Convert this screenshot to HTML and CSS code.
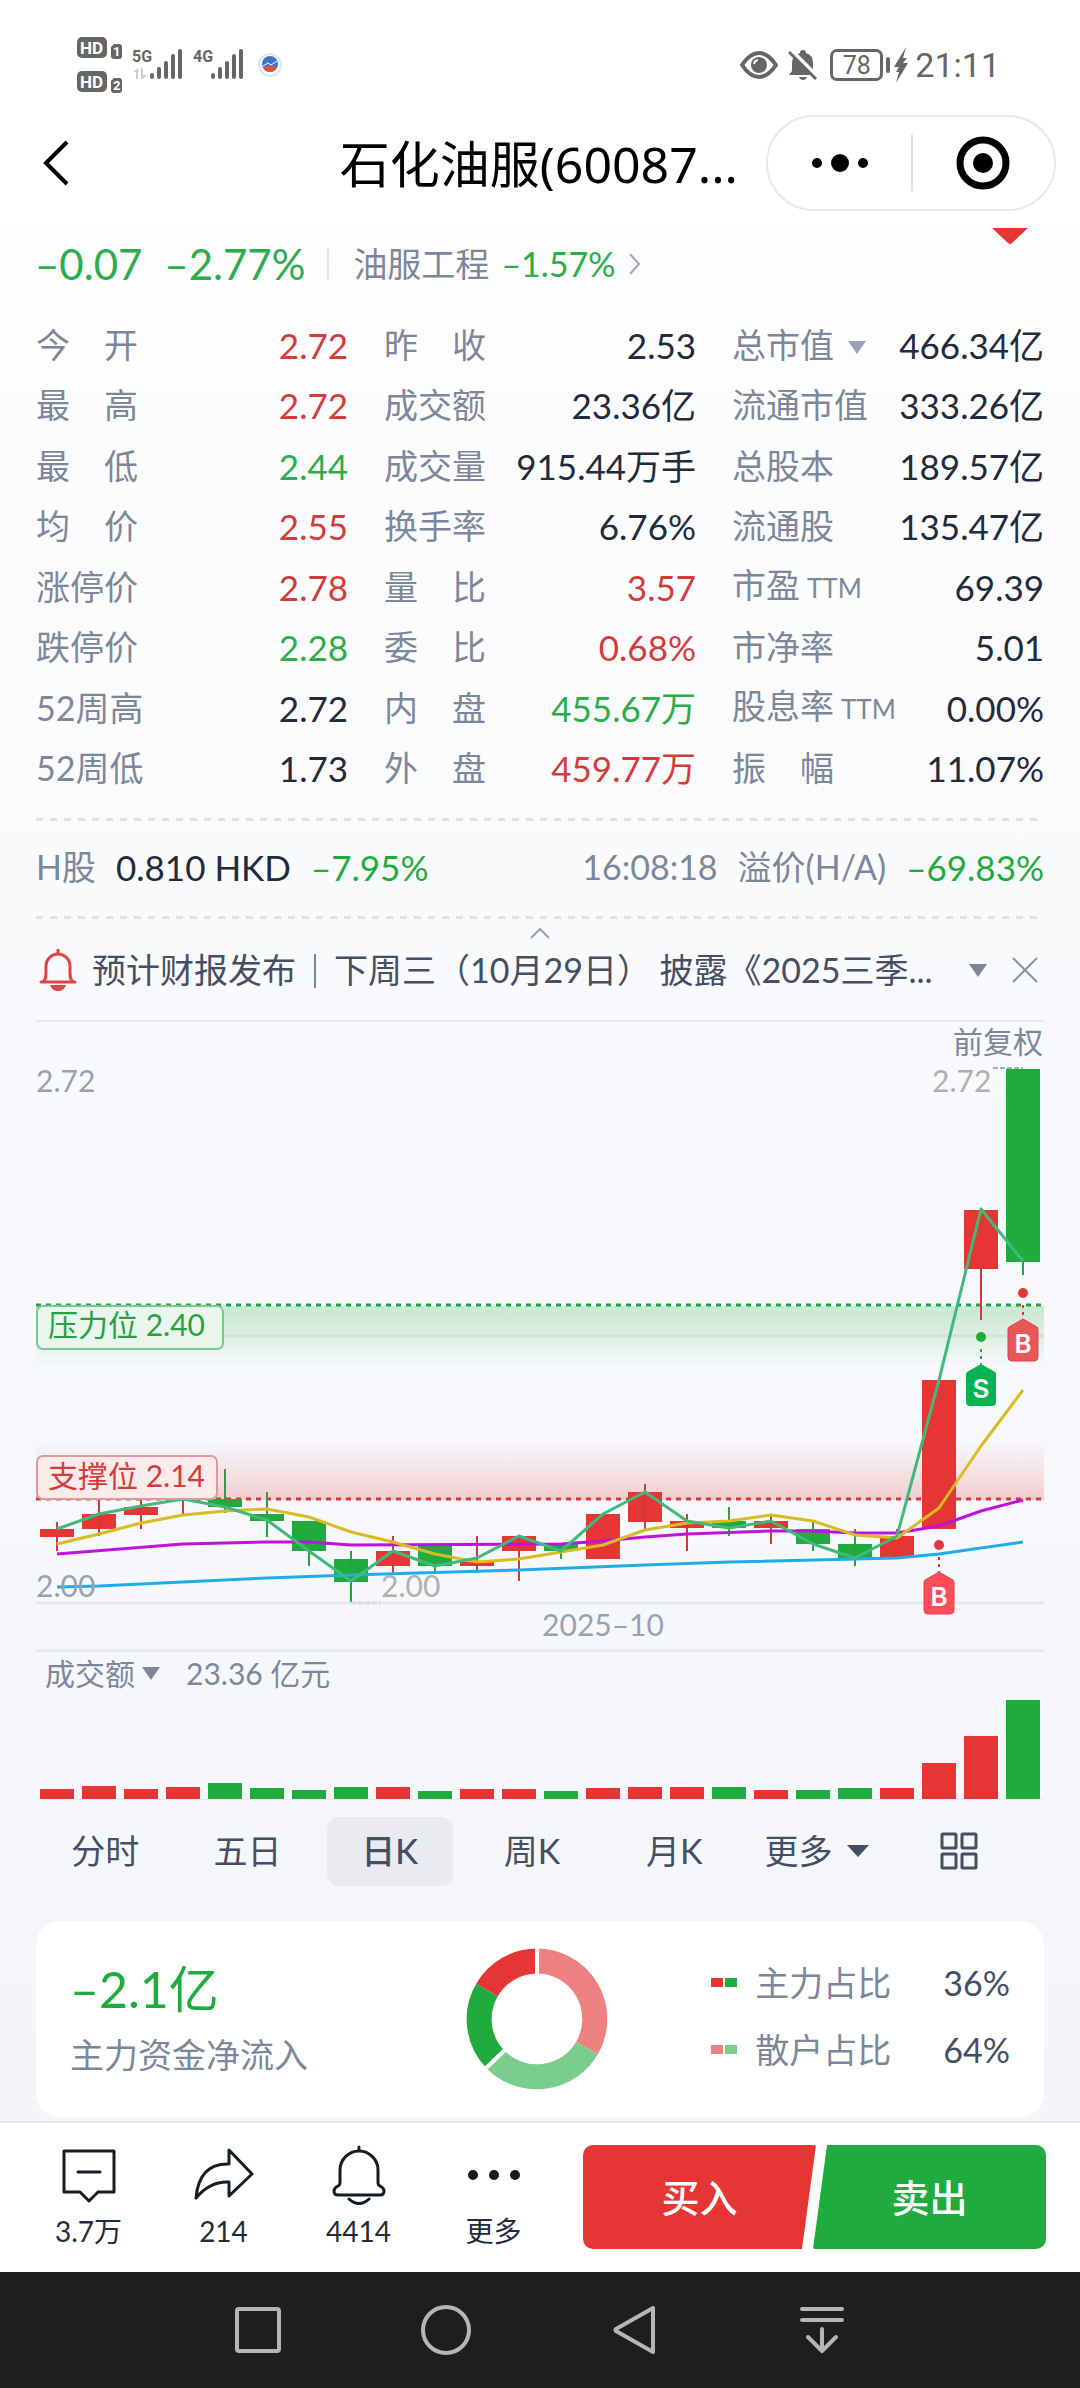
FILE: index.html
```html
<!DOCTYPE html>
<html lang="zh-CN">
<head>
<meta charset="utf-8">
<meta name="viewport" content="width=device-width, initial-scale=1">
<title>石化油服</title>
<link rel="stylesheet" href="styles.css">
</head>
<body>
<div class="status">
  <svg class="status-left" width="240" height="80" viewBox="60 25 240 80" role="img" aria-label="信号">
    <g fill="#666">
      <rect x="77" y="37" width="30" height="21" rx="5"/>
      <rect x="77" y="71" width="30" height="21" rx="5"/>
      <path d="M114 44h5a3 3 0 0 1 3 3v9a3 3 0 0 1-3 3h-5a3 3 0 0 1-3-3v-9z"/>
      <path d="M114 78h5a3 3 0 0 1 3 3v9a3 3 0 0 1-3 3h-5a3 3 0 0 1-3-3v-9z"/>
    </g>
    <g class="badge-text"><text x="80" y="54">HD</text><text x="80" y="88">HD</text></g>
    <g class="sim-text"><text x="113" y="56">1</text><text x="113" y="90">2</text></g>
    <g class="net-text"><text x="132" y="62">5G</text><text x="193" y="62">4G</text></g>
    <path d="M138 68v11h-2v-7h-3zM141 68h2v7h4l-4 4h-2z" fill="#ccc"/>
    <g stroke="#666" stroke-width="4" stroke-linecap="round">
      <path d="M152 75v2M159 69v8M166 63v14M173 56v21M180 51v26M213 75v2M220 69v8M227 63v14M234 56v21M241 51v26"/>
    </g>
    <circle cx="270" cy="65" r="11" fill="none" stroke="#dbe8f0" stroke-width="2"/>
    <circle cx="270" cy="64" r="8" fill="#3d74c9"/>
    <path d="M263 67q7-3 14 0q-2 5-7 5t-7-5z" fill="#d9553f"/>
    <path d="M263 66l5-3 3 2 6-4" fill="none" stroke="#fff" stroke-width="1"/>
  </svg>
  <div class="status-right">
    <svg width="38" height="30" viewBox="0 0 38 30" aria-hidden="true"><path d="M2 15Q10 3 19 3t17 12Q28 27 19 27T2 15z" fill="none" stroke="#666" stroke-width="4"/><circle cx="19" cy="15" r="8" fill="#666"/><path d="M14 14a5 5 0 0 1 4-4" stroke="#fff" stroke-width="2" fill="none"/></svg>
    <svg width="30" height="32" viewBox="0 0 30 32" aria-hidden="true"><path d="M1 26l3-4V14q0-8 8-10a3 3 0 0 1 6 0q7 2 7 10v8l3 4z" fill="#666"/><path d="M11 28h8q-1 3-4 3t-4-3z" fill="#666"/><path d="M3 1l27 27" stroke="#fff" stroke-width="4"/><path d="M1 3l27 27" stroke="#666" stroke-width="3"/></svg>
    <span class="battery">78</span>
    <svg width="16" height="36" viewBox="0 0 16 36" aria-hidden="true"><path d="M13 0L1 20h5l-3 5h3L3 36 15 16h-5l4-5h-4z" fill="#666"/></svg>
    <span class="clock">21:11</span>
  </div>
</div>

<header class="header">
  <button class="back" aria-label="返回"><svg width="28" height="46" viewBox="0 0 28 46"><path d="M25 2L4 23l21 21" fill="none" stroke="#000" stroke-width="4"/></svg></button>
  <h1 class="title">石化油服(60087...</h1>
  <div class="capsule">
    <button aria-label="菜单"><svg width="58" height="20" viewBox="0 0 58 20"><circle cx="6" cy="10" r="5"/><circle cx="29" cy="10" r="9"/><circle cx="52" cy="10" r="5"/></svg></button>
    <button aria-label="关闭"><svg width="54" height="54" viewBox="0 0 54 54"><circle cx="27" cy="27" r="23" fill="none" stroke="#000" stroke-width="7"/><circle cx="27" cy="27" r="10"/></svg></button>
  </div>
</header>

<main class="content">
  <section class="quote">
    <span class="change down">–0.07</span>
    <span class="change down">–2.77%</span>
    <a class="sector" href="#sector">油服工程 <span class="down">–1.57%</span><svg width="14" height="24" viewBox="0 0 14 24" aria-hidden="true"><path d="M2 2l9 10-9 10" fill="none" stroke="#a0a8b8" stroke-width="2"/></svg></a>
    <svg class="marker" width="36" height="16" viewBox="0 0 36 16" aria-hidden="true"><path d="M0 0h36L20 15q-2 2-4 0z" fill="#e53535"/></svg>
  </section>

  <section class="stats">
    <dl>
      <div><dt>今　开</dt><dd class="up">2.72</dd></div>
      <div><dt>最　高</dt><dd class="up">2.72</dd></div>
      <div><dt>最　低</dt><dd class="down">2.44</dd></div>
      <div><dt>均　价</dt><dd class="up">2.55</dd></div>
      <div><dt>涨停价</dt><dd class="up">2.78</dd></div>
      <div><dt>跌停价</dt><dd class="down">2.28</dd></div>
      <div><dt>52周高</dt><dd>2.72</dd></div>
      <div><dt>52周低</dt><dd>1.73</dd></div>
    </dl>
    <dl>
      <div><dt>昨　收</dt><dd>2.53</dd></div>
      <div><dt>成交额</dt><dd>23.36亿</dd></div>
      <div><dt>成交量</dt><dd>915.44万手</dd></div>
      <div><dt>换手率</dt><dd>6.76%</dd></div>
      <div><dt>量　比</dt><dd class="up">3.57</dd></div>
      <div><dt>委　比</dt><dd class="up">0.68%</dd></div>
      <div><dt>内　盘</dt><dd class="down">455.67万</dd></div>
      <div><dt>外　盘</dt><dd class="up">459.77万</dd></div>
    </dl>
    <dl>
      <div><dt>总市值<svg class="caret" width="18" height="13" viewBox="0 0 18 13" aria-hidden="true"><path d="M0 0h18L9 13z" fill="#98a1b5"/></svg></dt><dd>466.34亿</dd></div>
      <div><dt>流通市值</dt><dd>333.26亿</dd></div>
      <div><dt>总股本</dt><dd>189.57亿</dd></div>
      <div><dt>流通股</dt><dd>135.47亿</dd></div>
      <div><dt>市盈<small>TTM</small></dt><dd>69.39</dd></div>
      <div><dt>市净率</dt><dd>5.01</dd></div>
      <div><dt>股息率<small>TTM</small></dt><dd>0.00%</dd></div>
      <div><dt>振　幅</dt><dd>11.07%</dd></div>
    </dl>
  </section>

  <section class="hshare">
    <span>H股</span>
    <strong>0.810 HKD</strong>
    <strong class="down">–7.95%</strong>
    <span class="push">16:08:18</span>
    <span>溢价(H/A)</span>
    <strong class="down">–69.83%</strong>
  </section>
  <button class="collapse" aria-label="收起"><svg width="20" height="12" viewBox="0 0 20 12"><path d="M1 11l9-9 9 9" fill="none" stroke="#98a1b5" stroke-width="2"/></svg></button>

  <section class="notice">
    <svg width="38" height="42" viewBox="0 0 38 42" aria-hidden="true"><path d="M19 1v4M2 33h34M4 33q3-3 3-8v-8a12 12 0 0 1 24 0v8q0 5 3 8" fill="none" stroke="#e04444" stroke-width="3" stroke-linecap="round"/><path d="M11 36h16q-2 6-8 6t-8-6z" fill="#d94a4a"/></svg>
    <p>预计财报发布<i></i>下周三（10月29日） 披露《2025三季...</p>
    <button aria-label="展开"><svg width="18" height="13" viewBox="0 0 18 13"><path d="M0 0h18L9 13z" fill="#7d879b"/></svg></button>
    <button aria-label="关闭提醒"><svg width="26" height="26" viewBox="0 0 26 26"><path d="M1 1l24 24M25 1L1 25" stroke="#8a94a8" stroke-width="2"/></svg></button>
  </section>

  <svg class="kline" viewBox="0 1022 1080 630" role="img" aria-label="日K线图">
    <defs>
      <linearGradient id="press" x1="0" y1="0" x2="0" y2="1"><stop offset="0" stop-color="#1fab3d" stop-opacity=".22"/><stop offset=".5" stop-color="#1fab3d" stop-opacity=".12"/><stop offset="1" stop-color="#1fab3d" stop-opacity="0"/></linearGradient>
      <linearGradient id="hold" x1="0" y1="1" x2="0" y2="0"><stop offset="0" stop-color="#e53535" stop-opacity=".22"/><stop offset="1" stop-color="#e53535" stop-opacity="0"/></linearGradient>
      <path id="tag" d="M0 0L14 8Q15 9 15 11V38Q15 42 11 42H-11Q-15 42-15 38V11Q-15 9-14 8z"/>
    </defs>
    <rect x="36" y="1306" width="1008" height="60" fill="url(#press)"/>
    <rect x="36" y="1442" width="1008" height="58" fill="url(#hold)"/>
    <path d="M36 1336H1044M36 1603H1044M36 1651H1044" stroke="#788296" stroke-opacity=".12" stroke-width="3"/>
    <path d="M36 1305H1044" stroke="#2a9f44" stroke-width="3" stroke-dasharray="5 5"/>
    <path d="M36 1499H1044" stroke="#cf3b3b" stroke-width="3" stroke-dasharray="5 5"/>

    <!-- rising candles -->
    <path fill="#e53535" d="M40 1529h34v8H40zM82 1514h34v15H82zM124 1507h34v8h-34zM166 1499h34v2h-34zM376 1551h34v15h-34zM460 1562h34v4h-34zM502 1536h34v15h-34zM586 1514h34v45h-34zM628 1492h34v30h-34zM670 1521h34v7h-34zM754 1521h34v7h-34zM880 1536h34v22h-34zM922 1380h34v149h-34zM964 1210h34v59h-34z"/>
    <path stroke="#cf3b3b" stroke-width="2" d="M57 1522v29M99 1500v36M141 1500v29M183 1500v14M393 1536v37M477 1536v37M519 1536v45M645 1484v46M687 1514v37M771 1514v30M897 1529v7M981 1269v51"/>
    <!-- falling candles -->
    <path fill="#1fab3d" d="M208 1499h34v8h-34zM250 1514h34v7h-34zM292 1521h34v30h-34zM334 1559h34v23h-34zM418 1546h34v20h-34zM544 1544h34v7h-34zM712 1521h34v7h-34zM796 1529h34v15h-34zM838 1544h34v14h-34zM1006 1069h34v193h-34z"/>
    <path stroke="#2a9f44" stroke-width="2" d="M225 1469v44M267 1492v45M309 1551v15M351 1551v51M435 1566v6M561 1551v8M729 1507v29M813 1522v29M855 1529v37M1023 1262v13"/>

    <g fill="none" stroke-width="3" stroke-linejoin="round">
      <path stroke="#1fadea" d="M57 1587L99 1586 267 1578 351 1575 519 1570 645 1565 729 1562 897 1558 939 1554 981 1548 1023 1542"/>
      <path stroke="#c212da" d="M57 1554L183 1544 267 1542 309 1542 351 1545 561 1544 603 1541 645 1537 687 1534 771 1531 813 1531 855 1533 897 1533 939 1526 981 1511 1023 1500"/>
      <path stroke="#d9bb22" d="M57 1544L99 1534 141 1523 183 1515 225 1511 267 1509 309 1517 351 1532 393 1542 435 1554 477 1562 519 1559 561 1552 603 1545 645 1530 687 1523 729 1521 771 1515 813 1521 855 1535 897 1538 939 1508 981 1446 1023 1390"/>
      <path stroke="#40b97a" d="M57 1529L99 1514 141 1506 183 1499 225 1507 267 1520 309 1551 351 1581 393 1551 435 1566 477 1558 519 1536 561 1551 603 1514 645 1492 687 1521 729 1528 771 1521 813 1544 855 1558 897 1536 939 1380 981 1209 1023 1261"/>
    </g>

    <!-- price tags of the two levels -->
    <rect x="37" y="1306" width="186" height="43" rx="6" fill="#e8f6eb" stroke="#7fc78f" stroke-width="2"/>
    <text x="48" y="1336" class="level down">压力位 2.40</text>
    <rect x="37" y="1456" width="180" height="43" rx="6" fill="#fdeaea" stroke="#dc9a9e" stroke-width="2"/>
    <text x="48" y="1487" class="level up">支撑位 2.14</text>

    <g class="axis">
      <text x="1043" y="1053" text-anchor="end" fill="#7d879b">前复权</text>
      <text x="36" y="1092">2.72</text>
      <text x="36" y="1597">2.00</text>
      <text x="603" y="1636" text-anchor="middle">2025–10</text>
      <g fill="#b0b0b0"><text x="932" y="1092">2.72</text><text x="381" y="1597">2.00</text></g>
    </g>
    <path d="M993 1068h30" stroke="#b0b0b0" stroke-width="2" stroke-dasharray="5 2"/>
    <path d="M351 1603h30" stroke="#dcdcdc" stroke-width="3" stroke-dasharray="5 2"/>

    <!-- trade markers -->
    <g fill="#e03a3a"><circle cx="1023" cy="1293" r="5"/><circle cx="939" cy="1545" r="5"/></g>
    <circle cx="981" cy="1337" r="5" fill="#1fab3d"/>
    <path d="M1023 1305v15M939 1557v15" stroke="#cf3b3b" stroke-width="2" stroke-dasharray="3 4"/>
    <path d="M981 1349v15" stroke="#2a9f44" stroke-width="2" stroke-dasharray="3 4"/>
    <use href="#tag" x="1023" y="1319" fill="#ea5558" stroke="#dd4248"/>
    <use href="#tag" x="939" y="1572" fill="#ff4d5a" stroke="#ea3c4a"/>
    <use href="#tag" x="981" y="1364" fill="#05b350"/>
    <g class="tag-text"><text x="1023" y="1353">B</text><text x="939" y="1606">B</text><text x="981" y="1398">S</text></g>
  </svg>

  <section class="volume">
    <div class="volume-head"><button>成交额<svg width="18" height="13" viewBox="0 0 18 13" aria-hidden="true"><path d="M0 0h18L9 13z" fill="#7d879b"/></svg></button><span>23.36 亿元</span></div>
    <div class="bars">
      <i class="r" style="height:10px"></i><i class="r" style="height:13px"></i><i class="r" style="height:10px"></i><i class="r" style="height:12px"></i><i style="height:16px"></i><i style="height:11px"></i><i style="height:9px"></i><i style="height:12px"></i><i class="r" style="height:12px"></i><i style="height:8px"></i><i class="r" style="height:10px"></i><i class="r" style="height:10px"></i><i style="height:8px"></i><i class="r" style="height:11px"></i><i class="r" style="height:12px"></i><i class="r" style="height:12px"></i><i style="height:12px"></i><i class="r" style="height:9px"></i><i style="height:9px"></i><i style="height:11px"></i><i class="r" style="height:11px"></i><i class="r" style="height:36px"></i><i class="r" style="height:63px"></i><i style="height:99px"></i>
    </div>
  </section>

  <nav class="tabs">
    <button>分时</button>
    <button>五日</button>
    <button class="active">日K</button>
    <button>周K</button>
    <button>月K</button>
    <button>更多<svg width="22" height="12" viewBox="0 0 22 12" aria-hidden="true"><path d="M0 0h22L11 12z" fill="#444f63"/></svg></button>
    <button aria-label="多图"><svg width="38" height="38" viewBox="0 0 38 38"><g fill="none" stroke="#444f63" stroke-width="3"><rect x="2" y="2" width="14" height="14" rx="1"/><rect x="22" y="2" width="14" height="14" rx="1"/><rect x="2" y="22" width="14" height="14" rx="1"/><rect x="22" y="22" width="14" height="14" rx="1"/></g></svg></button>
  </nav>

  <section class="card">
    <div class="flow"><strong>–2.1亿</strong><span>主力资金净流入</span></div>
    <svg class="donut" width="142" height="142" viewBox="-71 -71 142 142" role="img" aria-label="资金占比">
      <g fill="none" stroke-width="25">
        <path stroke="#ee8080" d="M0-58A58 58 0 0 1 50 29"/>
        <path stroke="#7acd8d" d="M50 29A58 58 0 0 1-42 40"/>
        <path stroke="#1fab3d" d="M-42 40A58 58 0 0 1-50-29"/>
        <path stroke="#e53535" d="M-50-29A58 58 0 0 1 0-58"/>
      </g>
      <path d="M0-40V-71M-29 28L-54 52" stroke="#fff" stroke-width="4"/>
    </svg>
    <dl class="legend">
      <div><dt><i class="main-in"></i><i class="main-out"></i>主力占比</dt><dd>36%</dd></div>
      <div><dt><i class="retail-in"></i><i class="retail-out"></i>散户占比</dt><dd>64%</dd></div>
    </dl>
  </section>
</main>

<footer class="toolbar">
  <div class="tools">
    <button><svg width="60" height="60" viewBox="0 0 60 60" aria-hidden="true"><path d="M5 6h50v41H39l-9 9-9-9H5z M19 27h22"/></svg>3.7万</button>
    <button><svg width="60" height="60" viewBox="0 0 60 60" aria-hidden="true"><path d="M35 5l23 24-23 22V37Q16 36 2 53 5 18 35 19z"/></svg>214</button>
    <button><svg width="60" height="60" viewBox="0 0 60 60" aria-hidden="true"><path d="M30 2v4M11 38V25a19 19 0 0 1 38 0v13q0 2 2 3 4 2 4 5 0 4-4 4H9q-4 0-4-4 0-3 4-5 2-1 2-3zM20 54q10 9 20 0"/></svg>4414</button>
    <button><svg width="60" height="60" viewBox="0 0 60 60" aria-hidden="true"><g fill="#1a1a1a" stroke="none"><circle cx="9" cy="30" r="5"/><circle cx="30" cy="30" r="5"/><circle cx="51" cy="30" r="5"/></g></svg>更多</button>
  </div>
  <div class="trade"><button class="buy">买入</button><button class="sell">卖出</button></div>
</footer>

<nav class="sysnav">
  <button aria-label="最近任务"><svg width="52" height="52" viewBox="0 0 52 52"><rect x="5" y="5" width="42" height="42" rx="2"/></svg></button>
  <button aria-label="主页"><svg width="52" height="52" viewBox="0 0 52 52"><circle cx="26" cy="26" r="23"/></svg></button>
  <button aria-label="后退"><svg width="52" height="52" viewBox="0 0 52 52"><path d="M45 4v44L8 27q-1-1 0-2z"/></svg></button>
  <button aria-label="下拉通知"><svg width="52" height="52" viewBox="0 0 52 52"><path d="M6 5h40M6 16h40M26 25v22M12 33l14 14 14-14"/></svg></button>
</nav>
</body>
</html>
```

FILE: styles.css
```css
* { box-sizing: border-box; }
body {
  margin: 0;
  background: #fff;
  color: #222b3c;
  font-family: Lato, "Noto Sans CJK SC", sans-serif;
  font-size: 34px;
  line-height: 48px;
}
button {
  margin: 0;
  padding: 0;
  border: 0;
  background: none;
  color: inherit;
  font: inherit;
  white-space: nowrap;
}
dl, dd, p, h1 { margin: 0; }
svg { flex: none; }
.up { color: #d23c3c; fill: #d23c3c; }
.down { color: #2bad4c; fill: #2a9f44; }

/* phone status bar */
.status {
  display: flex;
  align-items: flex-start;
  justify-content: space-between;
  height: 112px;
  padding: 16px 80px 0 60px;
}
.status-left { margin-top: 9px; }
.status-left text { font-family: Roboto, sans-serif; font-weight: 700; }
.badge-text { fill: #fff; font-size: 17px; }
.sim-text { fill: #fff; font-size: 13px; }
.net-text { fill: #666; font-size: 16px; }
.status-right {
  display: flex;
  align-items: center;
  gap: 10px;
  height: 98px;
  color: #666;
  font-family: Roboto, sans-serif;
}
.battery {
  position: relative;
  width: 53px;
  height: 32px;
  margin-left: 2px;
  border: 3px solid #666;
  border-radius: 7px;
  font-size: 25px;
  line-height: 27px;
  text-align: center;
}
.battery::after {
  content: "";
  position: absolute;
  top: 5px;
  right: -10px;
  width: 4px;
  height: 16px;
  border-radius: 2px;
  background: #666;
}
.status-right .clock { margin-left: -4px; }

/* title bar */
.header {
  display: flex;
  align-items: center;
  height: 116px;
  padding: 0 24px 14px 42px;
  color: #000;
}
.back { display: flex; }
.title {
  margin: 2px 28px 0 auto;
  font: 400 50px/70px "Noto Sans", "Noto Sans CJK SC", sans-serif;
  white-space: nowrap;
}
.capsule {
  display: flex;
  width: 290px;
  height: 96px;
  border: 2px solid #e8e8e8;
  border-radius: 48px;
}
.capsule button {
  position: relative;
  display: flex;
  flex: 1;
  align-items: center;
  justify-content: center;
}
.capsule button + button::before {
  content: "";
  position: absolute;
  left: 0;
  top: 18px;
  width: 2px;
  height: 56px;
  background: #dcdcdc;
}

.content {
  padding-bottom: 4px;
  background: linear-gradient(#fdfdfe, #f8f9fc 50%, #f4f5fa);
}

/* price change and sector */
.quote {
  display: flex;
  align-items: center;
  height: 72px;
  margin-bottom: 15px;
  padding: 0 52px 0 35px;
}
.change { margin-right: 22px; font-size: 42px; }
.sector {
  display: flex;
  align-items: center;
  gap: 12px;
  padding-left: 24px;
  border-left: 2px solid #e3e5ea;
  color: #7d879b;
  line-height: 34px;
  text-decoration: none;
}
.marker { align-self: flex-start; margin-left: auto; }

/* key figures */
.stats {
  display: grid;
  grid-template-columns: repeat(3, 1fr);
  gap: 36px;
  padding: 0 36px;
}
.stats dl {
  display: flex;
  flex-direction: column;
  justify-content: space-between;
  min-height: 483px;
}
.stats dl > div {
  display: flex;
  align-items: center;
  justify-content: space-between;
  height: 60px;
  white-space: nowrap;
}
.stats dt { color: #7d879b; }
.stats dd { font-size: 35px; }
.stats small { margin-left: 7px; font-size: 26px; }
.caret { margin-left: 14px; vertical-align: 4px; }

/* H share line between two dotted rules */
.hshare {
  display: flex;
  align-items: center;
  gap: 20px;
  height: 101px;
  margin: 20px 36px 0;
  padding-bottom: 4px;
  background:
    repeating-linear-gradient(90deg, #dfe1e8 0 7px, transparent 7px 14px) top / 100% 3px no-repeat,
    repeating-linear-gradient(90deg, #dfe1e8 0 7px, transparent 7px 14px) bottom / 100% 3px no-repeat;
  color: #7d879b;
  white-space: nowrap;
}
.hshare strong { color: #222b3c; font-size: 35px; font-weight: 400; }
.hshare .down { color: #1fab3d; }
.hshare .push { margin-left: auto; }
.collapse {
  display: flex;
  align-items: center;
  justify-content: center;
  width: 100%;
  height: 28px;
}

.notice {
  display: flex;
  align-items: center;
  height: 75px;
  margin: 0 36px;
  padding: 0 6px 27px 3px;
  border-bottom: 2px solid #e9ebef;
  color: #444f63;
}
.notice p { flex: 1; margin-left: 15px; white-space: nowrap; }
.notice i {
  display: inline-block;
  width: 2px;
  height: 34px;
  margin: 0 18px;
  background: #7d879b;
  vertical-align: -5px;
}
.notice button { display: flex; margin-left: 25px; }

/* candlestick chart */
.kline { display: block; width: 100%; height: auto; }
.level { font-size: 30px; }
.axis { fill: #98a1b3; font-size: 30px; }
.tag-text {
  fill: #fff;
  font-family: Inter, sans-serif;
  font-size: 26px;
  font-weight: 600;
  text-anchor: middle;
}

/* turnover */
.volume { margin: 0 36px; color: #7d879b; font-size: 30px; }
.volume-head { display: flex; align-items: center; gap: 26px; height: 42px; padding-left: 9px; }
.volume-head button { display: flex; align-items: center; gap: 7px; }
.bars {
  display: flex;
  align-items: flex-end;
  gap: 8px;
  height: 106px;
  padding: 0 4px;
  border-bottom: 1px solid #e9ebef;
}
.bars i { flex: 1; background: #1fab3d; }
.bars .r { background: #e53535; }

/* period tabs */
.tabs {
  display: grid;
  grid-template-columns: repeat(7, 1fr);
  margin: 17px 50px 35px 34px;
  color: #444f63;
}
.tabs button {
  display: flex;
  align-items: center;
  justify-content: center;
  gap: 14px;
  height: 69px;
  margin: 0 8px;
  padding-bottom: 2px;
  border-radius: 12px;
}
.tabs .active { background: #e9ebf0; font-weight: 500; }

/* money flow */
.card {
  display: flex;
  align-items: center;
  justify-content: space-between;
  height: 196px;
  margin: 0 36px;
  padding: 0 34px;
  border-radius: 24px;
  background: #fff;
}
.flow { display: flex; flex: 1; flex-direction: column; padding-bottom: 6px; color: #7d879b; }
.flow strong { color: #1fab3d; font-size: 50px; font-weight: 400; line-height: 72px; }
.flow span { margin-top: 6px; }
.donut { margin-right: 6px; }
.legend { display: flex; flex: 1; flex-direction: column; gap: 19px; padding-bottom: 6px; }
.legend div { display: flex; justify-content: flex-end; }
.legend dt { display: flex; align-items: center; color: #7d879b; }
.legend dd { margin-left: 52px; color: #444f63; }
.legend i { width: 12px; height: 9px; margin-right: 2px; }
.legend i + i { margin-right: 18px; }
.main-in { background: #e53535; }
.main-out { background: #1fab3d; }
.retail-in { background: #ee8080; }
.retail-out { background: #7acd8d; }

/* bottom actions */
.toolbar {
  display: flex;
  justify-content: space-between;
  height: 151px;
  padding: 22px 34px 0 21px;
  border-top: 2px solid #e6e8ec;
  background: #fff;
}
.tools { display: flex; flex: 1; }
.tools button {
  display: flex;
  flex: 0 1 135px;
  flex-direction: column;
  align-items: center;
  gap: 6px;
  font-size: 28px;
  line-height: 40px;
}
.tools path { fill: none; stroke: #171c24; stroke-width: 3; stroke-linejoin: round; stroke-linecap: round; }
.trade { display: flex; flex: 0 1 463px; }
.trade button { flex: 1; height: 104px; color: #fff; font-size: 38px; font-weight: 500; }
.trade .buy {
  border-radius: 10px 2px 2px 10px;
  background: #e53535;
  clip-path: polygon(0 0, 100% 0, calc(100% - 14px) 100%, 0 100%);
}
.trade .sell {
  margin-left: -3px;
  border-radius: 2px 10px 10px 2px;
  background: #1fab3d;
  clip-path: polygon(14px 0, 100% 0, 100% 100%, 0 100%);
}

.sysnav { display: flex; justify-content: center; height: 116px; background: #1e1e1e; }
.sysnav button { display: flex; flex: 0 1 188px; align-items: center; justify-content: center; }
.sysnav svg { fill: none; stroke: #b5b5b5; stroke-width: 4; stroke-linejoin: round; stroke-linecap: round; }
```
